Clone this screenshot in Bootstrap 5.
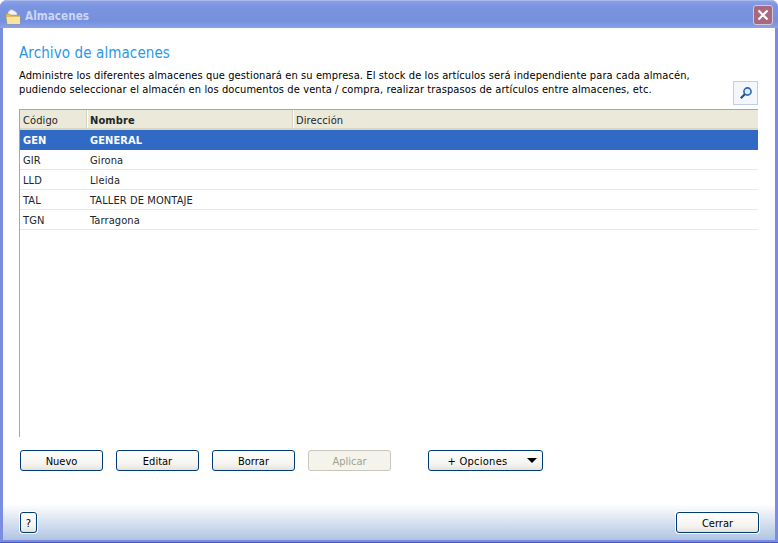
<!DOCTYPE html>
<html lang="es">
<head>
<meta charset="utf-8">
<title>Almacenes</title>
<link rel="stylesheet" href="https://cdn.jsdelivr.net/npm/bootstrap@5.3.0/dist/css/bootstrap.min.css">
<style>
html,body{height:100%;margin:0;overflow:hidden;background:#fff}
body{font-family:"DejaVu Sans Condensed","DejaVu Sans",sans-serif;font-size:11px;color:#000;letter-spacing:.105px}
.win-frame{width:778px;height:543px;background:#7b8de0;border-radius:7px 7px 0 0;padding:0 3px 3px;box-shadow:inset 0 -1px 0 #4a55c0}
.win-title{height:28px;background:linear-gradient(#8ba0e4 0,#7a94e0 20%,#7590de 75%,#8aa2e8 100%);margin:0 -3px;padding:4px 5px 0 5px;border-radius:7px 7px 0 0;border-top:1px solid #a8b8ee}
.win-name{font-size:11.7px;font-weight:700;color:#c9d6f5;line-height:1;margin-left:4px;letter-spacing:0}
.win-close{width:20px;height:20px;background:#a8687f;border:1px solid #d5c8dc;border-radius:3px;margin-top:-4px}
.win-body{height:512px;background:#fff}
.main-area{padding:16px 16px 0;height:476px}
.page-heading{font-size:15px;font-weight:400;color:#2b97e8;line-height:18px;margin:0 0 7px}
.intro-line{line-height:14px;margin:0;width:700px;white-space:nowrap}
.find-btn{width:25px;height:24px;border:1px solid #bcd0e8;background:#f3f7fc;padding:0;margin:12px 1px 0 0;border-radius:0}
.intro-row{height:40px}
.grid-box{height:328px;border-left:1px solid #aca899;width:739px}
.grid-box .table{margin:0;font-size:11px;--bs-table-bg:transparent;table-layout:fixed;width:738px}
.grid-box th{height:19px;padding:0 4px;background:#ebe9d9;font-weight:400;border-top:1px solid #aca899;border-bottom:2px solid #d9d6c4;line-height:15px}
.grid-box th.sorted{font-weight:700}
.grid-box th+th{box-shadow:inset 1px 0 0 #d6d3c2,inset 2px 0 0 #fff}
.grid-box td{height:20px;padding:2px 4px 0;border-bottom:1px solid #ebe9d9;line-height:17px}
.grid-box th:first-child,.grid-box td:first-child{padding-left:3px}
.grid-box tr.is-picked td{background:#316ac5;color:#fff;font-weight:700;border-bottom-color:#316ac5;--bs-table-color:#fff}
.cmd-row{margin-top:13px;padding-left:1px}
.win-btn{flex:none;height:21px;width:83px;font-size:11px;line-height:19px;padding:1px 0 0;border:1px solid #003c74;border-radius:3px;background:linear-gradient(#fff,#f4f3ee 70%,#e6e3d8);color:#000}
.win-btn:disabled{opacity:1;border-color:#c9c7ba;background:#f4f4ec;color:#a1a192}
.gap-one{margin-left:13px}
.gap-two{margin-left:37px}
.opts-btn{width:115px;position:relative;padding-right:16px;letter-spacing:.25px}
.opts-caret{position:absolute;right:5px;top:7px;width:0;height:0;border-left:5px solid transparent;border-right:5px solid transparent;border-top:5px solid #000}
.foot-band{height:36px;background:linear-gradient(#fff,#b0c4e2);padding:0 16px 0 17px}
.help-btn{width:17px;box-shadow:0 0 0 1px #fff}
.close-btn{width:83px;box-shadow:0 0 0 1px #fff}
</style>
</head>
<body>
<div class="win-frame d-flex flex-column">
  <div class="win-title d-flex align-items-center">
    <svg width="16" height="16" viewBox="0 0 16 16" aria-hidden="true"><path d="M3 3l3-2.500 3 1 3 2.500v2H3z" fill="#f2f3f6" stroke="#a8aec0" stroke-width=".6"/><path d="M1 5h4l1 1.500h9V15H2z" fill="#e2bd62" stroke="#b89a50" stroke-width=".5"/><path d="M1.500 8h13.500v7H2.500z" fill="#f8e3a0"/></svg>
    <span class="win-name">Almacenes</span>
    <div class="win-close ms-auto d-flex align-items-center justify-content-center">
      <svg width="12" height="12" viewBox="0 0 12 12" aria-hidden="true"><path d="M1.500 1.500l9 9M10.500 1.500l-9 9" stroke="#fff" stroke-width="2.200"/></svg>
    </div>
  </div>
  <div class="win-body d-flex flex-column">
    <div class="main-area">
      <h1 class="page-heading">Archivo de almacenes</h1>
      <div class="intro-row d-flex">
        <div>
          <p class="intro-line">Administre los diferentes almacenes que gestionará en su empresa. El stock de los artículos será independiente para cada almacén,</p>
          <p class="intro-line">pudiendo seleccionar el almacén en los documentos de venta / compra, realizar traspasos de artículos entre almacenes, etc.</p>
        </div>
        <button type="button" class="btn find-btn ms-auto d-flex align-items-center justify-content-center" aria-label="Buscar">
          <svg width="14" height="14" viewBox="0 0 14 14" aria-hidden="true"><circle cx="8.500" cy="5.500" r="3.600" fill="#dfeaf8" stroke="#2f66ad" stroke-width="1.600"/><path d="M5.800 8.200L1.800 12.200" stroke="#1e4f94" stroke-width="2.200"/></svg>
        </button>
      </div>
      <div class="grid-box">
        <table class="table">
          <colgroup><col style="width:66px"><col style="width:206px"><col></colgroup>
          <thead><tr><th>Código</th><th class="sorted">Nombre</th><th>Dirección</th></tr></thead>
          <tbody>
            <tr class="is-picked"><td>GEN</td><td>GENERAL</td><td></td></tr>
            <tr><td>GIR</td><td>Girona</td><td></td></tr>
            <tr><td>LLD</td><td>Lleida</td><td></td></tr>
            <tr><td>TAL</td><td>TALLER DE MONTAJE</td><td></td></tr>
            <tr><td>TGN</td><td>Tarragona</td><td></td></tr>
          </tbody>
        </table>
      </div>
      <div class="cmd-row d-flex">
        <button type="button" class="btn win-btn">Nuevo</button>
        <button type="button" class="btn win-btn gap-one">Editar</button>
        <button type="button" class="btn win-btn gap-one">Borrar</button>
        <button type="button" class="btn win-btn gap-one" disabled>Aplicar</button>
        <button type="button" class="btn win-btn opts-btn gap-two">+ Opciones<span class="opts-caret"></span></button>
      </div>
    </div>
    <div class="foot-band d-flex align-items-center justify-content-between">
      <button type="button" class="btn win-btn help-btn">?</button>
      <button type="button" class="btn win-btn close-btn">Cerrar</button>
    </div>
  </div>
</div>
<script src="https://cdn.jsdelivr.net/npm/bootstrap@5.3.0/dist/js/bootstrap.bundle.min.js"></script>
</body>
</html>
